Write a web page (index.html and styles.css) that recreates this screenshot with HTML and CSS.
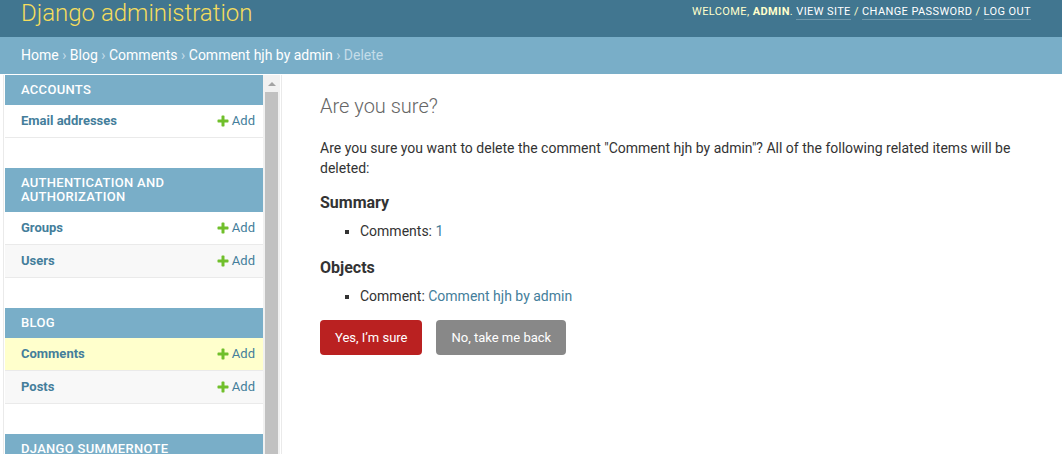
FILE: index.html
```html
<!DOCTYPE html>
<html lang="en">
<head>
<meta charset="utf-8">
<title>Are you sure? | Django site admin</title>
<link rel="stylesheet" href="styles.css">
</head>
<body>
<div class="header">
  <div class="branding">Django administration</div>
  <div class="user-tools">Welcome, <strong>admin</strong>. <a href="#">View site</a> / <a href="#">Change password</a> / <a href="#">Log out</a></div>
</div>
<div class="breadcrumbs"><a href="#">Home</a> › <a href="#">Blog</a> › <a href="#">Comments</a> › <a href="#">Comment hjh by admin</a> › Delete</div>
<div class="main">
  <div class="toggle"></div>
  <div class="sidebar">
    <div class="nav">
      <div class="module">
        <div class="caption">Accounts</div>
        <div class="row"><a class="model" href="#">Email addresses</a><a class="addlink" href="#"><svg width="14" height="14" viewBox="0 0 1792 1792"><path fill="#70bf2b" d="M1600 796v192q0 40-28 68t-68 28h-416v416q0 40-28 68t-68 28h-192q-40 0-68-28t-28-68v-416h-416q-40 0-68-28t-28-68v-192q0-40 28-68t68-28h416v-416q0-40 28-68t68-28h192q40 0 68 28t28 68v416h416q40 0 68 28t28 68z"/></svg>Add</a></div>
      </div>
      <div class="module">
        <div class="caption">Authentication and Authorization</div>
        <div class="row"><a class="model" href="#">Groups</a><a class="addlink" href="#"><svg width="14" height="14" viewBox="0 0 1792 1792"><path fill="#70bf2b" d="M1600 796v192q0 40-28 68t-68 28h-416v416q0 40-28 68t-68 28h-192q-40 0-68-28t-28-68v-416h-416q-40 0-68-28t-28-68v-192q0-40 28-68t68-28h416v-416q0-40 28-68t68-28h192q40 0 68 28t28 68v416h416q40 0 68 28t28 68z"/></svg>Add</a></div>
        <div class="row alt"><a class="model" href="#">Users</a><a class="addlink" href="#"><svg width="14" height="14" viewBox="0 0 1792 1792"><path fill="#70bf2b" d="M1600 796v192q0 40-28 68t-68 28h-416v416q0 40-28 68t-68 28h-192q-40 0-68-28t-28-68v-416h-416q-40 0-68-28t-28-68v-192q0-40 28-68t68-28h416v-416q0-40 28-68t68-28h192q40 0 68 28t28 68v416h416q40 0 68 28t28 68z"/></svg>Add</a></div>
      </div>
      <div class="module">
        <div class="caption">Blog</div>
        <div class="row current"><a class="model" href="#">Comments</a><a class="addlink" href="#"><svg width="14" height="14" viewBox="0 0 1792 1792"><path fill="#70bf2b" d="M1600 796v192q0 40-28 68t-68 28h-416v416q0 40-28 68t-68 28h-192q-40 0-68-28t-28-68v-416h-416q-40 0-68-28t-28-68v-192q0-40 28-68t68-28h416v-416q0-40 28-68t68-28h192q40 0 68 28t28 68v416h416q40 0 68 28t28 68z"/></svg>Add</a></div>
        <div class="row alt"><a class="model" href="#">Posts</a><a class="addlink" href="#"><svg width="14" height="14" viewBox="0 0 1792 1792"><path fill="#70bf2b" d="M1600 796v192q0 40-28 68t-68 28h-416v416q0 40-28 68t-68 28h-192q-40 0-68-28t-28-68v-416h-416q-40 0-68-28t-28-68v-192q0-40 28-68t68-28h416v-416q0-40 28-68t68-28h192q40 0 68 28t28 68v416h416q40 0 68 28t28 68z"/></svg>Add</a></div>
      </div>
      <div class="module">
        <div class="caption">Django Summernote</div>
        <div class="row"><a class="model" href="#">Attachments</a><a class="addlink" href="#">Add</a></div>
      </div>
    </div>
    <div class="scrollbar">
      <div class="sb-button"><span class="sb-arrow"></span></div>
      <div class="sb-thumb"></div>
    </div>
  </div>
  <div class="content">
    <h1>Are you sure?</h1>
    <p>Are you sure you want to delete the comment "Comment hjh by admin"? All of the following related items will be deleted:</p>
    <h2>Summary</h2>
    <ul>
      <li>Comments: <a href="#">1</a></li>
    </ul>
    <h2>Objects</h2>
    <ul>
      <li>Comment: <a href="#">Comment hjh by admin</a></li>
    </ul>
    <div class="actions">
      <a class="btn btn-danger" href="#">Yes, I’m sure</a>
      <a class="btn btn-cancel" href="#">No, take me back</a>
    </div>
  </div>
</div>
</body>
</html>
```
FILE: styles.css
```css
html, body {
  margin: 0;
  padding: 0;
  height: 100%;
  overflow: hidden;
}
body {
  font-family: Roboto, "Liberation Sans", sans-serif;
  font-size: 14px;
  color: #333;
  background: #fff;
}
a {
  color: #447e9b;
  text-decoration: none;
}

.header {
  height: 37px;
  box-sizing: border-box;
  background: #417690;
  padding: 1px 31px 0 21px;
  display: flex;
  justify-content: space-between;
  align-items: flex-start;
}
.branding {
  font-size: 24px;
  font-weight: 300;
  line-height: 24px;
  color: #f5dd5d;
}
.user-tools {
  margin-top: 4px;
  font-size: 11px;
  line-height: 14px;
  letter-spacing: 0.4px;
  text-transform: uppercase;
  color: #ffc;
}
.user-tools strong {
  font-weight: 700;
}
.user-tools a {
  color: #fff;
  border-bottom: 1px solid rgba(255, 255, 255, 0.25);
  padding-bottom: 1px;
}

.breadcrumbs {
  background: #79aec8;
  padding: 10px 21px;
  font-size: 14px;
  line-height: 17px;
  color: #c4dce8;
}
.breadcrumbs a {
  color: #fff;
}

.main {
  display: flex;
  box-sizing: border-box;
  padding-top: 1px;
  height: calc(100vh - 74px);
}
.toggle {
  flex: 0 0 3px;
  border-right: 1px solid #eaeaea;
}
.sidebar {
  flex: 0 0 276px;
  display: flex;
  padding-left: 1px;
  border-right: 1px solid #eaeaea;
  overflow: hidden;
}
.nav {
  flex: 0 0 258px;
}
.module {
  margin-bottom: 30px;
}
.caption {
  background: #79aec8;
  color: #fff;
  font-size: 13px;
  line-height: 14px;
  font-weight: 500;
  text-transform: uppercase;
  letter-spacing: 0.3px;
  padding: 8px 60px 8px 16px;
}
.row {
  display: flex;
  justify-content: space-between;
  padding: 8px 8px 8px 16px;
  font-size: 13px;
  line-height: 16px;
  border-bottom: 1px solid #eaeaea;
  background: #fff;
}
.row.alt {
  background: #f8f8f8;
}
.row.current {
  background: #ffc;
}
.model {
  font-weight: 700;
}
.addlink {
  display: inline-flex;
  align-items: flex-start;
}
.addlink svg {
  margin: 1px 2px 0 0;
  flex: none;
}

.scrollbar {
  flex: 0 0 17px;
  background: #f1f1f1;
  display: flex;
  flex-direction: column;
  align-items: center;
}
.sb-button {
  height: 17px;
  width: 17px;
  display: flex;
  align-items: center;
  justify-content: center;
}
.sb-arrow {
  width: 0;
  height: 0;
  border-left: 4px solid transparent;
  border-right: 4px solid transparent;
  border-bottom: 4px solid #a3a3a3;
}
.sb-thumb {
  width: 13px;
  flex: 1;
  background: #c1c1c1;
}

.content {
  flex: 1;
  padding: 19px 40px 20px 38px;
}
h1 {
  margin: 0 0 20px;
  font-size: 20px;
  font-weight: 300;
  color: #666;
}
p {
  margin: 4px 0 11px;
  line-height: 20px;
}
h2 {
  margin: 15px 0 9px;
  font-size: 16px;
  line-height: 19px;
  font-weight: 700;
  color: #333;
}
ul {
  margin: 3px 0 11px;
  padding-left: 40px;
}
li {
  list-style-type: square;
  padding: 1px 0;
  line-height: 19.6px;
}
.actions {
  display: flex;
  gap: 14px;
  margin-top: 13px;
}
.btn {
  display: block;
  padding: 10px 15px;
  font-size: 13px;
  line-height: 15px;
  color: #fff;
  border-radius: 4px;
}
.btn-danger {
  background: #ba2121;
}
.btn-cancel {
  background: #888;
}
```
